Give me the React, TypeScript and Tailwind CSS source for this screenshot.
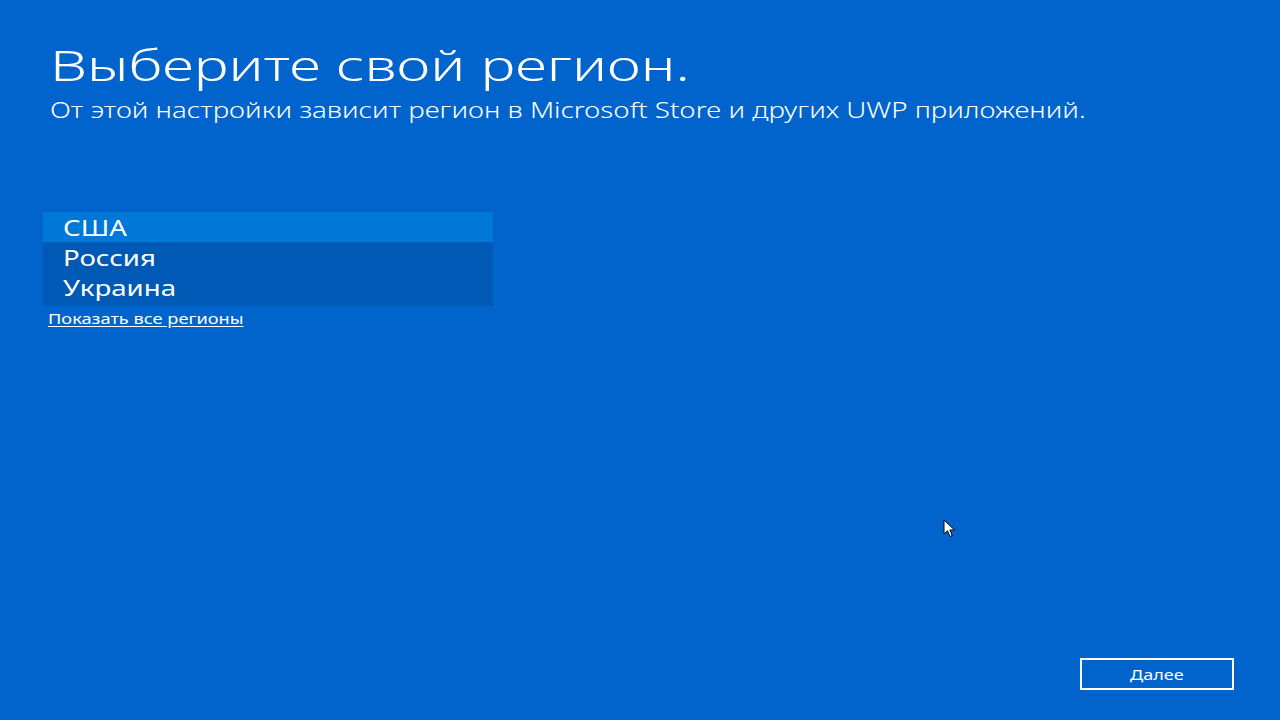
export default function App() {
  return (
    <div
      className="relative w-[1280px] h-[720px] bg-[#0064cc] text-white overflow-hidden"
      style={{ fontFamily: '"Noto Sans", "Open Sans", sans-serif' }}
    >
      <div className="flex flex-col h-full">
        <div className="pl-[50px] pt-[37px]">
          <h1 className="text-[42px] leading-[56px] font-light whitespace-nowrap">
            <span className="inline-block origin-left scale-x-[1.394]">Выберите свой регион.</span>
          </h1>
          <p className="text-[21px] leading-[28px] mt-[3px] font-light whitespace-nowrap">
            <span className="inline-block origin-left scale-x-[1.318]">
              От этой настройки зависит регион в Microsoft Store и других UWP приложений.
            </span>
          </p>
        </div>
        <div className="ml-[43px] mt-[88px] w-[450px] bg-[#0059b5] pb-[4px] flex flex-col">
          <div className="h-[30px] bg-[#0078d7] pl-[20px] text-[22px] leading-[30px]">
            <span className="inline-block origin-left scale-x-[1.255]">США</span>
          </div>
          <div className="h-[30px] pl-[20px] text-[22px] leading-[30px]">
            <span className="inline-block origin-left scale-x-[1.255]">Россия</span>
          </div>
          <div className="h-[30px] pl-[20px] text-[22px] leading-[30px]">
            <span className="inline-block origin-left scale-x-[1.255]">Украина</span>
          </div>
        </div>
        <div className="ml-[48px] mt-[3px] text-[14px] leading-[20px]">
          <span className="inline-block origin-left scale-x-[1.3] underline underline-offset-2">
            Показать все регионы
          </span>
        </div>
        <div className="flex-1" />
        <div className="flex justify-end pr-[46px] pb-[30px]">
          <div className="w-[154px] h-[32px] border-2 border-white flex items-center justify-center text-[14px]">
            <span className="inline-block scale-x-[1.29]">Далее</span>
          </div>
        </div>
      </div>
      <svg className="absolute left-[943px] top-[519px]" width="14" height="20" viewBox="0 0 14 20">
        <path d="M1 1 L1 15 L4.5 11.8 L7 17.5 L9.2 16.5 L6.8 11 L11.5 11 Z" fill="white" stroke="black" strokeWidth="1" />
      </svg>
    </div>
  );
}
